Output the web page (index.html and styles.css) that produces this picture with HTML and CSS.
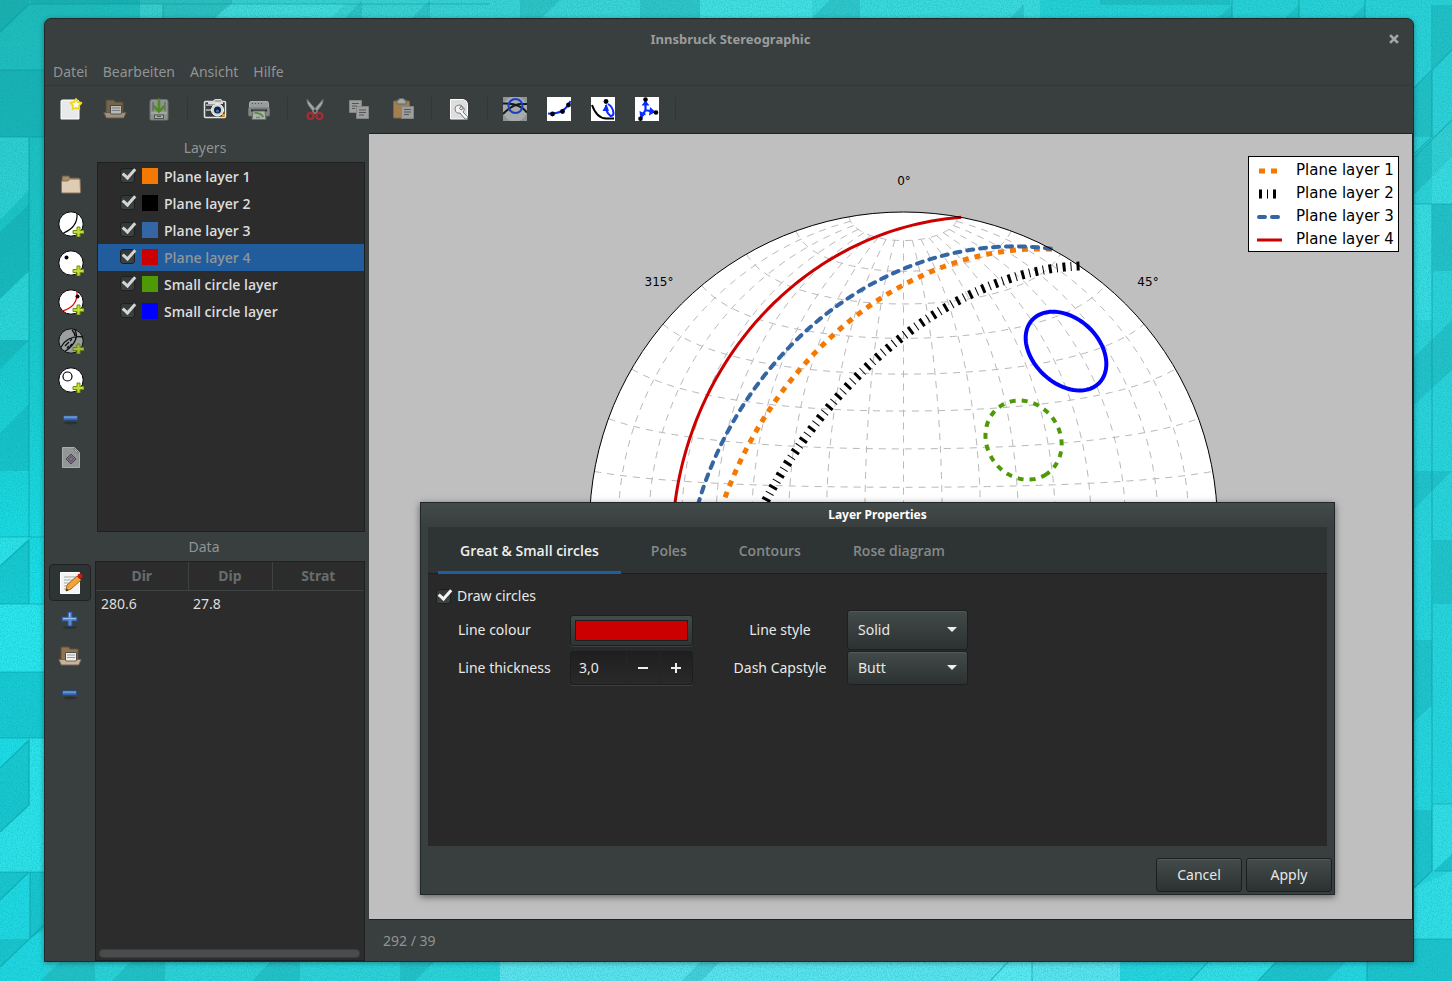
FILE: index.html
```html
<!DOCTYPE html>
<html lang="de">
<head>
<meta charset="utf-8">
<title>Innsbruck Stereographic</title>
<link rel="stylesheet" href="styles.css">
</head>
<body class="desktop">
<svg class="wallpaper" viewBox="0 0 1452 981" preserveAspectRatio="none" aria-hidden="true">
  <defs>
    <linearGradient id="wall" x1="0" y1="0" x2="1" y2="1">
      <stop offset="0" stop-color="#21b8b8"/><stop offset=".3" stop-color="#24d0d4"/><stop offset=".6" stop-color="#2fd2d8"/><stop offset="1" stop-color="#25d6e2"/>
    </linearGradient>
    <linearGradient id="wallLeft" x1="0" y1="0" x2="0" y2="1">
      <stop offset="0" stop-color="#22baba"/><stop offset=".35" stop-color="#1cc9cd"/><stop offset=".62" stop-color="#1ce0ea"/><stop offset="1" stop-color="#22d6e0"/>
    </linearGradient>
    <filter id="grain" x="0" y="0" width="100%" height="100%"><feTurbulence type="fractalNoise" baseFrequency=".8" numOctaves="2" seed="4"/><feColorMatrix type="matrix" values="0 0 0 0 0  0 0 0 0 .35  0 0 0 0 .38  1.4 0 0 0 -.55"/></filter>
  </defs>
  <rect width="1452" height="981" fill="url(#wall)"/>
  <rect width="46" height="981" fill="url(#wallLeft)"/>
  <rect x="140" width="900" height="20" fill="#62e6e8" opacity=".4"/>
  <rect x="500" y="960" width="620" height="21" fill="#8ff4ff" opacity=".5"/>
  <g fill="#0b8f96" opacity=".25">
    <path d="M0 0H29V4L0 32ZM0 70H46V137H0ZM29 204V271L0 299V232ZM0 340H29L0 369ZM29 404V471H0V433ZM29 540V604H0V566ZM0 672H46V738H0ZM29 740V805L0 832V768ZM0 872H29L0 900ZM30 872H44V930L30 938ZM0 939H29L0 967ZM60 962H95V981H40Z"/>
    <path d="M31 0H165V4H31ZM163 0H232V4L215 18H163ZM345 18L362 0V18ZM412 18L430 0V18ZM520 0H560L542 18H520ZM640 0H700V18H640ZM812 18L830 0H860V18ZM1010 18L1024 4V18ZM1100 0H1230V5H1100ZM1218 18L1232 5V18ZM1285 18L1299 5V18ZM1351 18L1365 5V18Z"/>
    <path d="M1433 5H1452V50L1433 68ZM1432 72V137H1414V88ZM1452 120V157L1414 195V157ZM1433 204H1452V271H1433ZM1452 320V370L1414 405V357ZM1414 471H1452L1414 509ZM1433 540H1452V604H1433ZM1414 640H1432V705L1414 722ZM1452 854V871H1434ZM1414 810H1432V871L1414 888ZM1414 939H1452V981H1414Z"/>
    <path d="M130 962H165V981H112ZM270 962H300V981H252ZM400 962H434L415 981H400ZM1276 962H1346L1327 981H1258ZM1367 962H1452V981H1367ZM700 962H720L701 981H682Z"/>
  </g>
  <g fill="#5ffafc" opacity=".25">
    <path d="M29 137V190L0 220V137ZM29 271V340H0V299ZM0 537H29L0 566ZM0 604H44V672H0ZM30 738H44V872H0V832L30 805Z"/>
    <path d="M230 4H345L331 18H215ZM700 0H812V18H700ZM1414 157L1452 120V204H1432V137ZM1433 804H1452V854L1433 871ZM1414 888L1452 871V939H1414ZM1414 204H1432V320H1414ZM1008 962H1032V981H990ZM1208 962H1276L1258 981H1190Z"/>
  </g>
  <path d="M0 32L29 4H490M0 70H46M0 137H46M29 137V537M0 537H44M0 566L29 540V604M0 604H44M0 672H44M0 738H44M0 768L29 740V805L0 832M0 872H44M0 900L29 872M30 872V938M0 967L44 925M163 4V18M1232 0V18M1299 0V18M1365 0V18M1432 5V137L1414 154M1452 50L1414 88M1452 120L1414 157M1414 204H1452M1432 204V804H1452M1432 804V871L1414 888M1434 871H1452M1414 939H1452M990 981L1008 962M1032 962V981M1190 981L1208 962M1258 981L1276 962M1367 962V981" fill="none" stroke="#07898f" stroke-width="1.2" opacity=".45"/>
  <rect width="1452" height="981" filter="url(#grain)" opacity=".6"/>
</svg>

<main class="window">
  <header class="titlebar">
    <h1 class="titlebar-text">Innsbruck Stereographic</h1>
    <button class="close" aria-label="Schließen"><svg width="10" height="10" viewBox="0 0 10 10"><path d="M2 2L8 8M8 2L2 8" stroke="#a3a6a4" stroke-width="2.6" stroke-linecap="square"/></svg></button>
  </header>
  <nav class="menubar">
    <button>Datei</button><button>Bearbeiten</button><button>Ansicht</button><button>Hilfe</button>
  </nav>

  <div class="toolbar">
    <button class="tool" aria-label="New"><svg viewBox="0 0 24 24"><path d="M4 3h14q2 0 2 2v17H2V4q0-1 2-1z" fill="#e9e9e9" stroke="#fff"/><path d="M17 2l1.800 3 3.600.8-2.400 2.800.3 3.600-3.300-1.400-3.300 1.400.3-3.600-2.400-2.800 3.600-.8z" fill="#fffdf0" stroke="#f0d91a" stroke-width="1.800" stroke-linejoin="round"/></svg></button>
    <button class="tool dim" aria-label="Open"><svg viewBox="0 0 24 24"><use href="#openfolder"/></svg></button>
    <button class="tool dim" aria-label="Save"><svg viewBox="0 0 24 24"><path d="M5 2.500h14q2 0 2 2V22q0 1-1 1H4q-1 0-1-1V4.500q0-2 2-2z" fill="#b4b7b3" stroke="#858985"/><path d="M5 5h2v9H5zM17 5h2v9h-2z" fill="#8b8f8b"/><path d="M4 16h16" stroke="#eceeea"/><rect x="7.500" y="18" width="9" height="3.500" fill="#dfe1dd" stroke="#5c605c"/><path d="M10 19.500h4" stroke="#5c605c"/><path d="M12 1.500v12M6.500 9l5.500 5.500L17.500 9" fill="none" stroke="#5cab1b" stroke-width="2.600"/></svg></button>
    <span class="sep"></span>
    <button class="tool" aria-label="Snapshot"><svg viewBox="0 0 24 24"><rect x="1.500" y="4.500" width="21" height="16" rx="1" fill="#383c3c" stroke="#e4e6e4" stroke-width="1.500"/><path d="M5 6V4h5l2-2h6l2 3v2H5z" fill="#d7d9d7"/><path d="M12 4h6" stroke="#777"/><path d="M3 8h8M3 13h5" stroke="#fff" stroke-width="1.200"/><circle cx="14.500" cy="13" r="6" fill="#d3d6d6" stroke="#fff"/><circle cx="14.500" cy="13" r="3.500" fill="#10243e"/><circle cx="14.500" cy="14" r="1.600" fill="#3d75b8"/><rect x="19" y="17" width="3" height="2.500" fill="#f29b17"/></svg></button>
    <button class="tool dim" aria-label="Print"><svg viewBox="0 0 24 24"><path d="M4 4.500h16q1.500 0 1.500 2V11h-19V6.500q0-2 1.500-2z" fill="#c2c5c2" stroke="#dcdedc"/><path d="M5 6.500h12" stroke="#5a5e5c" stroke-dasharray="1 2"/><path d="M1.500 11h21v7q0 1-1 1h-19q-1 0-1-1z" fill="#a3a6a3" stroke="#858885"/><path d="M4 12.500h16v2H4z" fill="#1f2323"/><path d="M6 14h12l1 8.500H5z" fill="#dfe3de" stroke="#7a7e7b"/><path d="M7.500 15.500l6 1.500 3 3" fill="none" stroke="#6fb04a" stroke-width="2"/><path d="M9 20.500h4" stroke="#7fa2c4" stroke-width="1.500"/></svg></button>
    <span class="sep"></span>
    <button class="tool dim" aria-label="Cut"><svg viewBox="0 0 24 24"><path d="M4 2.500q0 4 2 6.500l6.500 8 2-2.500zM20 2.500q0 4-2 6.500l-6.500 8-2-2.500z" fill="#d0d3d0" stroke="#9b9f9c" stroke-width=".8"/><circle cx="7.500" cy="19" r="3" fill="none" stroke="#d8262f" stroke-width="2.200"/><circle cx="16.500" cy="19" r="3" fill="none" stroke="#d8262f" stroke-width="2.200"/></svg></button>
    <button class="tool dim" aria-label="Copy"><svg viewBox="0 0 24 24"><g fill="#c6c9c6" stroke="#a0a4a1"><path d="M2.500 3.500h12v12h-12z"/><path d="M9.500 9.500h12v12h-12z"/></g><path d="M5 6.500h7M5 9h5M5 11.500h3M12 13h7M12 15.500h7M12 18h5" stroke="#5d615f"/></svg></button>
    <button class="tool dim" aria-label="Paste"><svg viewBox="0 0 24 24"><rect x="2.500" y="4" width="16" height="17" rx="1" fill="#cf9b58" stroke="#a07840"/><path d="M6 3h2V1.500h5V3h2v4H6z" fill="#d4d7d4" stroke="#777a77"/><path d="M10.500 9.500h12v12h-12z" fill="#c6c9c6" stroke="#a0a4a1"/><path d="M13 12.500h7M13 15h7M13 17.500h5" stroke="#5d615f"/></svg></button>
    <span class="sep"></span>
    <button class="tool" aria-label="Plot properties"><svg viewBox="0 0 24 24"><path d="M3.500 2.500h13q4 1 4 5V22h-17z" fill="#dcdddc" stroke="#fff"/><path d="M16 11a4 4 0 1 0-3 5l5 6q3 1 3-2l-5-5q2-2 1-4l-3 2-1.500-1.500L14 9q1 0 2 2z" fill="#f3f3f3" stroke="#777b79"/></svg></button>
    <span class="sep"></span>
    <button class="tool" aria-label="Intersect"><svg viewBox="0 0 24 24"><path d="M0 0h24v24H0z" fill="#8f9494"/><circle cx="12" cy="12" r="12.500" fill="#a7abab"/><path d="M0 17Q10 7 18 7h6M0 6.500Q16 6 24 15.500" fill="none" stroke="#151a1c" stroke-width="2"/><circle cx="12.500" cy="9" r="7" fill="none" stroke="#1e3fc0" stroke-width="2"/></svg></button>
    <button class="tool" aria-label="Best plane"><svg viewBox="0 0 24 24"><path d="M0 0h24v24H0z" fill="#fff"/><path d="M1 16.500Q17 18 23.500 4" fill="none" stroke="#0a2dff" stroke-width="2"/><circle cx="5.500" cy="17" r="2.400"/><circle cx="15.500" cy="14.500" r="2.400"/><circle cx="21.500" cy="8" r="2.400"/></svg></button>
    <button class="tool" aria-label="Plane from lines"><svg viewBox="0 0 24 24"><path d="M0 0h24v24H0z" fill="#fff"/><path d="M1 8Q6 22 16 21.500H23" fill="none" stroke="#000" stroke-width="2"/><path d="M17 7q5 3 5.500 9 0 3-3 3-5-4-4.500-11" fill="none" stroke="#0a2dff" stroke-width="2"/><path d="M11.500 14l4-7 2.500 7z" fill="#0a2dff"/><circle cx="15" cy="4.500" r="2.400"/></svg></button>
    <button class="tool" aria-label="Eigenvectors"><svg viewBox="0 0 24 24"><path d="M0 0h24v24H0z" fill="#fff"/><path d="M10.500 13V4M10 13l10 2M10.500 13L6 21" stroke="#0a2dff" stroke-width="2.200"/><path d="M6.500 8.500l4-5 4 5zM4.500 14l.8 7 6-4zM15 10l5.500 5-6.500 3.500z" fill="#0a2dff"/><circle cx="10.500" cy="2.500" r="2.300"/><circle cx="21" cy="15.500" r="2.300"/><circle cx="5.500" cy="21.700" r="2.300"/></svg></button>
    <span class="sep"></span>
  </div>

  <div class="body">
    <aside class="side">
      <section class="layers">
        <div class="rail rail-layers">
          <button aria-label="New group"><svg viewBox="0 0 26 26"><path d="M4 6q0-2 1-2h6l1 2h9v5H4z" fill="#a78c6b" stroke="#6f5a41"/><path d="M3.500 9H10l1.500-2H22l.5 13q0 1-1 1h-17q-1 0-1-1z" fill="#dfccb4" stroke="#8b745a"/></svg></button>
          <button aria-label="New plane layer"><svg viewBox="0 0 26 26"><circle cx="13" cy="13" r="12.200" fill="#fff" stroke="#000"/><path d="M19 2.500Q20 16 5.500 22" fill="none" stroke="#000" stroke-width="1.200"/><use href="#plus"/></svg></button>
          <button aria-label="New line layer"><svg viewBox="0 0 26 26"><circle cx="13" cy="13" r="12.200" fill="#fff" stroke="#000"/><circle cx="8.500" cy="7.500" r="2"/><use href="#plus"/></svg></button>
          <button aria-label="New fault layer"><svg viewBox="0 0 26 26"><circle cx="13" cy="13" r="12.200" fill="#fff" stroke="#000"/><path d="M19 2.500Q20 18 4 22" fill="none" stroke="#e80c0c" stroke-width="1.200"/><circle cx="19.500" cy="7.500" r="2"/><use href="#plus"/></svg></button>
          <button class="faded" aria-label="New plane and line layer"><svg viewBox="0 0 26 26"><circle cx="13" cy="13" r="12.200" fill="#b4b8b8" stroke="#000"/><path d="M3 19Q10 7 25 9M16.500 1Q23 12 7 23.500M14 2q3 3 3 6M7 18l4-4M9 20l2-2M14 11l-2 2M14 16l-2 2" fill="none" stroke="#000" stroke-width="1.300"/><use href="#plus"/></svg></button>
          <button aria-label="New small circle layer"><svg viewBox="0 0 26 26"><circle cx="13" cy="13" r="12.200" fill="#fff" stroke="#000"/><circle cx="9.500" cy="9.500" r="4.500" fill="none" stroke="#000" stroke-width="1.200"/><use href="#plus"/></svg></button>
          <button aria-label="Remove layer"><svg viewBox="0 0 26 26"><use href="#minus"/></svg></button>
          <button class="faded" aria-label="Layer properties"><svg viewBox="0 0 26 26"><path d="M4.500 2.500h12l5 5v15h-17z" fill="#a9adab" stroke="#c6cac7"/><path d="M16 3q0 5 5 5z" fill="#d4d8d5" stroke="#878c89"/><path d="M13 9l5 5-5 5-5-5z" fill="#8f8398" stroke="#4d4458"/><path d="M13 11.500l2.500 2.500-2.500 2.500-2.500-2.500z" fill="none" stroke="#4d4458" stroke-width=".8"/></svg></button>
        </div>
        <div class="pane">
          <h2 class="pane-title">Layers</h2>
          <ul class="layer-list">
            <li><input type="checkbox" checked id="l1"><span class="swatch orange"></span><label for="l1">Plane layer 1</label></li>
            <li><input type="checkbox" checked id="l2"><span class="swatch black"></span><label for="l2">Plane layer 2</label></li>
            <li><input type="checkbox" checked id="l3"><span class="swatch steel"></span><label for="l3">Plane layer 3</label></li>
            <li class="selected"><input type="checkbox" checked id="l4"><span class="swatch red"></span><label for="l4">Plane layer 4</label></li>
            <li><input type="checkbox" checked id="l5"><span class="swatch green"></span><label for="l5">Small circle layer</label></li>
            <li><input type="checkbox" checked id="l6"><span class="swatch blue"></span><label for="l6">Small circle layer</label></li>
          </ul>
        </div>
      </section>
      <section class="data">
        <div class="rail rail-data">
          <button class="active" aria-label="Edit"><svg viewBox="0 0 26 26"><path d="M3.500 2.500h19v21h-19z" fill="#f4f4f4" stroke="#fff"/><path d="M7 7h12M7 10h10M7 13h6M7 16h4M7 19h3" stroke="#a7a7a7"/><path d="M20 6l4 4-10 9-5 2 1-6z" fill="#f0a43a" stroke="#a5681b"/><path d="M9 21l.6-2.500 2 2z" fill="#222"/><circle cx="23" cy="6" r="2.500" fill="#cf1717"/></svg></button>
          <button aria-label="Add feature"><svg viewBox="0 0 26 26"><ellipse cx="13" cy="20.500" rx="7" ry="1.500" fill="#2c3030"/><path d="M11 5h4v5h5v4h-5v5h-4v-5H5v-4h6z" fill="#5c8bcb" stroke="#24539b"/><path d="M6 11.500h13M12.500 6v4" stroke="#9fc0ea"/></svg></button>
          <button aria-label="Import"><svg viewBox="0 0 26 26"><g transform="translate(1 0)"><use href="#openfolder"/></g></svg></button>
          <button aria-label="Remove feature"><svg viewBox="0 0 26 26"><use href="#minus"/></svg></button>
        </div>
        <div class="pane">
          <h2 class="pane-title">Data</h2>
          <div class="table-box">
            <table>
              <colgroup><col class="c1"><col class="c2"><col></colgroup>
              <thead><tr><th>Dir</th><th>Dip</th><th>Strat</th></tr></thead>
              <tbody><tr><td>280.6</td><td>27.8</td><td></td></tr></tbody>
            </table>
            <div class="hscroll"></div>
          </div>
        </div>
      </section>
    </aside>

    <section class="plot-column">
      <div class="plot">
        <svg id="net" class="net" viewBox="0 0 1043 785" preserveAspectRatio="xMidYMid meet" role="img" aria-label="Stereonet">
          <circle cx="534.500" cy="392" r="314" fill="#fff"/>
          <g id="grid" class="grid"></g>
          <g id="planes"></g>
          <circle class="rim" cx="534.500" cy="392" r="314"/>
          <text x="535" y="51">0°</text><text x="779" y="152">45°</text><text x="290" y="152">315°</text>
        </svg>
        <ul class="legend">
          <li><svg viewBox="0 0 26 10"><path class="p1" d="M2 5H26"/></svg>Plane layer 1</li>
          <li><svg viewBox="0 0 26 10"><path class="p2" d="M2 5H21"/></svg>Plane layer 2</li>
          <li><svg viewBox="0 0 26 10"><path class="p3" d="M2 5H21"/></svg>Plane layer 3</li>
          <li><svg viewBox="0 0 26 10"><path class="p4" d="M0 5H25"/></svg>Plane layer 4</li>
        </ul>
      </div>
      <footer class="status">292 / 39</footer>
    </section>
  </div>
</main>

<section class="dialog" role="dialog" aria-labelledby="dlg">
  <h2 id="dlg" class="dialog-title">Layer Properties</h2>
  <div class="notebook">
    <div class="tabs" role="tablist">
      <button role="tab" class="on" aria-selected="true">Great &amp; Small circles</button><button role="tab">Poles</button><button role="tab">Contours</button><button role="tab">Rose diagram</button>
    </div>
    <div class="page">
      <div class="draw"><input type="checkbox" checked id="draw"><label for="draw">Draw circles</label></div>
      <div class="form">
        <label for="colour">Line colour</label>
        <input class="colour" type="color" id="colour" value="#cc0000">
        <label class="mid" for="style">Line style</label>
        <div class="combo"><select id="style" class="tall"><option>Solid</option><option>Dashed</option></select></div>
        <label for="thick">Line thickness</label>
        <div class="spin"><input type="text" id="thick" value="3,0"><button aria-label="Less"><svg viewBox="0 0 12 12"><path d="M1 6H11" /></svg></button><button aria-label="More"><svg viewBox="0 0 12 12"><path d="M1 6H11M6 1V11"/></svg></button></div>
        <label class="mid" for="cap">Dash Capstyle</label>
        <div class="combo"><select id="cap"><option>Butt</option><option>Round</option></select></div>
      </div>
    </div>
  </div>
  <div class="actions"><button>Cancel</button><button>Apply</button></div>
</section>

<svg class="defs" aria-hidden="true">
  <defs>
    <g id="openfolder"><path d="M3 16V4q0-1 1-1h7l1 2h8v11z" fill="#8f7453" stroke="#654e33"/><path d="M7.500 8.500h11v9h-11z" fill="#eee" stroke="#4c4c4c"/><path d="M9 11h8M9 13.500h8" stroke="#999"/><path d="M.8 15.500H7l1 1.500h10l1-1.500h4.200L21 20.500q0 .5-1 .5H4q-1 0-1-.5z" fill="#c6b39d" stroke="#77634d"/></g>
    <g id="plus"><path d="M19 16h3v3.500h4v3h-4V26h-3v-3.500h-4v-3h4z" fill="#c3de32" stroke="#6f8f12"/></g>
    <g id="minus"><ellipse cx="13" cy="17" rx="7" ry="1.500" fill="#2c3030"/><path d="M5.500 10h14v4h-14z" fill="#3f74bd" stroke="#24539b"/><path d="M6 11h13" stroke="#8db2e2"/></g>
  </defs>
</svg>
<script src="script.js"></script>
</body>
</html>
```
FILE: styles.css
```css
* { box-sizing: border-box; }
body { margin: 0; font: 14px/20px "Noto Sans", "Open Sans", sans-serif; color: #919494; }
button, input, select { font: inherit; color: inherit; margin: 0; padding: 0; border: 0; background: none; }
h1, h2, ul { margin: 0; padding: 0; font-size: 14px; list-style: none; font-weight: 400; }
.desktop { position: relative; height: 100vh; min-height: 700px; padding: 18px 38px 19px 44px; display: flex; overflow: hidden; }
.wallpaper { position: absolute; inset: 0; width: 100%; height: 100%; z-index: -1; }
.defs { position: absolute; width: 0; height: 0; }

.window { flex: 1; min-width: 0; display: flex; flex-direction: column; background: #393e3e; border: 1px solid #252929; border-radius: 7px 7px 0 0; box-shadow: 0 1px 5px rgba(0,0,0,.35); }
.titlebar { display: flex; align-items: center; height: 39px; padding: 0 14px 0 27px; }
.titlebar-text { flex: 1; text-align: center; font-weight: 700; font-size: 13px; color: #9a9d9c; }
.close { display: flex; width: 10px; }
.menubar { display: flex; height: 28px; padding: 0 8px; gap: 15px; border-bottom: 1px solid #323737; }
.menubar button { padding-top: 1px; }
.toolbar { display: flex; align-items: center; height: 47px; padding: 0 4px 2px; }
.tool { width: 44px; height: 44px; display: grid; place-items: center; }
.tool svg { width: 24px; height: 24px; }
.dim { opacity: .7; }
.faded { opacity: .8; }
.sep { width: 12px; height: 24px; background: linear-gradient(#313636, #313636) center / 1px 100% no-repeat; }

.body { flex: 1; display: flex; min-height: 0; }
.side { flex: none; width: 324px; display: flex; flex-direction: column; padding-right: 4px; }
.layers { display: flex; height: 399px; }
.data { display: flex; flex: 1; min-height: 0; }
.rail { flex: none; display: flex; flex-direction: column; align-items: center; }
.rail-layers { width: 52px; padding-top: 32px; }
.rail-data { width: 50px; padding-top: 32px; }
.rail button { width: 42px; height: 37px; display: grid; place-items: center; border: 1px solid transparent; border-radius: 4px; }
.rail-layers button { height: 39px; }
.rail button.active { background: #2e3333; border-color: #1f2222; }
.rail svg { width: 26px; height: 26px; }
.pane { flex: 1; min-width: 0; display: flex; flex-direction: column; }
.pane-title { height: 29px; line-height: 30px; text-align: center; padding-right: 52px; }
.layer-list, .table-box { flex: 1; background: #2c2c2c; border: 1px solid #1e2121; min-height: 0; }
.layer-list li { height: 27px; display: flex; align-items: center; padding-left: 22px; color: #dcdcdc; font-family: "Open Sans", "Noto Sans", sans-serif; font-weight: 600; }
.layer-list li.selected { background: #215d9c; color: #8e9499; }
.layer-list input { margin-bottom: 3px; }
.swatch { width: 16px; height: 16px; margin: 0 6px 2px 7px; }
.orange { background: #f57900; } .black { background: #000; } .steel { background: #3465a4; }
.red { background: #c00; } .green { background: #4e9a06; } .blue { background: #00f; }
input[type=checkbox] { appearance: none; width: 15px; height: 15px; flex: none; border: 1px solid #1d2020; border-radius: 3px; background: linear-gradient(#323737, #3d4242); position: relative; }
input[type=checkbox]::after { content: ""; position: absolute; left: 4px; top: -3px; width: 5px; height: 10px; border: solid #d4d6d4; border-width: 0 3px 3px 0; transform: rotate(42deg); }
.table-box { display: flex; flex-direction: column; }
table { width: 100%; border-collapse: collapse; table-layout: fixed; }
.c1 { width: 92px; } .c2 { width: 84px; }
th { height: 28px; padding: 0; color: #686c6c; border-bottom: 1px solid #3d4343; border-right: 1px solid #3d4343; }
th:last-child { border-right: 0; }
td { height: 28px; padding: 0 5px; color: #dededc; }
.hscroll { margin: auto 4px 2px 3px; height: 9px; border-radius: 4px; background: #484c4c; border: 1px solid #3a3e3e; }

.plot-column { flex: 1; min-width: 0; display: flex; flex-direction: column; }
.plot { flex: 1; min-height: 0; position: relative; background: #bfbfbf; border: 1px solid #202323; border-width: 1px 1px 1px 0; }
.net { display: block; width: 100%; height: 100%; }
.net text { font: 12px "DejaVu Sans", sans-serif; text-anchor: middle; fill: #000; }
.net path, .legend path { fill: none; }
.grid path { stroke: #b8b8b8; stroke-width: 1; stroke-dasharray: 7 6; }
.rim { fill: none; stroke: #000; stroke-width: 1; }
.p1 { stroke: #f57900; stroke-width: 5; stroke-dasharray: 6 6; }
.p2 { stroke: #000; stroke-width: 9; stroke-dasharray: 3 5 1 5; }
.p3 { stroke: #3465a4; stroke-width: 4; stroke-dasharray: 6 7; stroke-linecap: round; }
.p4 { stroke: #c00; stroke-width: 3; }
.s1 { stroke: #4e9a06; stroke-width: 4; stroke-dasharray: 6 6; }
.s2 { stroke: #00f; stroke-width: 4; }
.legend { position: absolute; top: 22px; right: 13px; width: 151px; padding: 2px 0 0 8px; background: #fff; border: 1px solid #000; color: #000; font: 15px/23px "DejaVu Sans", sans-serif; }
.legend li { display: flex; align-items: center; gap: 13px; white-space: nowrap; }
.legend svg { width: 26px; height: 10px; flex: none; }
.status { height: 41px; line-height: 42px; padding-left: 14px; }

.dialog { position: absolute; left: 420px; top: 502px; width: 915px; color: #e8e8e6; background: #393e3e; border: 1px solid #22282a; box-shadow: 0 2px 7px rgba(0,0,0,.5); }
.dialog-title { height: 24px; line-height: 23px; text-align: center; font-weight: 700; font-size: 12px; color: #fff; background: linear-gradient(#434a4a, #393e3e); }
.notebook { margin: 0 7px; background: #292929; height: 319px; }
.tabs { display: flex; gap: 8px; height: 47px; padding: 0 10px; background: #2e3434; border-bottom: 1px solid #1b1f1f; font-family: "Open Sans", "Noto Sans", sans-serif; }
.tabs button { padding: 4px 22px 0; font-weight: 600; color: #858a89; height: 47px; border-bottom: 3px solid transparent; }
.tabs .on { color: #f0f0ee; border-color: #215d9c; }
.page { padding: 12px 8px; }
.draw { display: flex; align-items: center; gap: 6px; }
.page input[type=checkbox]::after { border-color: #f5f5f3; }
.form { display: grid; grid-template-columns: 92px 123px 114px 121px; column-gap: 20px; row-gap: 1px; padding: 4px 0 0 22px; align-items: center; white-space: nowrap; }
.mid { text-align: center; padding-left: 20px; }
.colour { width: 100%; height: 31px; padding: 4px; border: 1px solid #1c2020; border-radius: 3px; background: linear-gradient(#434a4a, #2f3535); box-shadow: 0 1px 0 #3c4040; }
.colour::-webkit-color-swatch-wrapper { padding: 0; }
.colour::-webkit-color-swatch { border: 1px solid #1c2020; border-radius: 0; }
.combo { position: relative; }
.combo::after { content: ""; position: absolute; right: 11px; top: 50%; margin-top: -3px; border: solid transparent; border-width: 5px 5px 0; border-top-color: #eee; pointer-events: none; }
.combo select { appearance: none; display: block; width: 100%; height: 34px; padding: 0 10px; border: 1px solid #1c2020; border-radius: 3px; background: linear-gradient(#434a4a, #2c3232); box-shadow: inset 0 1px 0 #535a5a; }
.combo select.tall { height: 40px; }
.spin { display: flex; height: 34px; border: 1px solid #1c1e1e; border-radius: 3px; background: linear-gradient(#1f1f1f, #292929); box-shadow: 0 1px 0 #3c4040; }
.spin input { flex: 1; min-width: 0; padding-left: 8px; }
.spin button { width: 33px; display: grid; place-items: center; border-left: 1px solid #252525; }
.spin svg { width: 12px; height: 12px; fill: none; stroke: #eee; stroke-width: 2; }
.actions { display: flex; justify-content: flex-end; gap: 4px; padding: 12px 2px 2px; }
.actions button { width: 86px; height: 34px; border: 1px solid #1a1e1e; border-radius: 3px; background: linear-gradient(#444b4b, #2c3232); box-shadow: inset 0 1px 0 #535a5a; }
```
FILE: script.js
```js
// Lambert equal-area stereonet, lower hemisphere.
const CX = 534.5, CY = 392, R = 314, D = Math.PI / 180;

// Unit vector (north, east, down) to plot coordinates.
function project([n, e, d]) {
  const k = R / Math.sqrt(1 + d);
  return (CX + e * k).toFixed(2) + " " + (CY - n * k).toFixed(2);
}
function addPath(parent, points, cls) {
  const p = document.createElementNS("http://www.w3.org/2000/svg", "path");
  p.setAttribute("d", "M" + points.map(project).join("L"));
  if (cls) p.setAttribute("class", cls);
  document.getElementById(parent).appendChild(p);
}
function greatCircle(strike, dip, from, to) {
  const pts = [];
  const s = strike * D, t = dip * D;
  for (let r = from; r <= to; r += 1) {
    const a = Math.cos(r * D), b = Math.sin(r * D);
    pts.push([a * Math.cos(s) + b * Math.cos(t) * Math.sin(s),
              a * Math.sin(s) - b * Math.cos(t) * Math.cos(s),
              b * Math.sin(t)]);
  }
  return pts;
}
function cone(azimuth, plunge, angle) {
  const a = azimuth * D, p = plunge * D, g = angle * D, pts = [];
  const axis = [Math.cos(p) * Math.cos(a), Math.cos(p) * Math.sin(a), Math.sin(p)];
  const u = [-Math.sin(a), Math.cos(a), 0];
  const v = [-Math.sin(p) * Math.cos(a), -Math.sin(p) * Math.sin(a), Math.cos(p)];
  for (let t = 0; t <= 360; t += 4) {
    pts.push(axis.map((x, i) => x * Math.cos(g) + Math.sin(g) * (u[i] * Math.cos(t * D) + v[i] * Math.sin(t * D))));
  }
  return pts;
}

for (let dip = 10; dip < 180; dip += 10) addPath("grid", greatCircle(0, dip, 10, 170));
for (let lat = -80; lat <= 80; lat += 10) {
  const pts = [];
  for (let t = 0; t <= 180; t += 2) {
    pts.push([Math.sin(lat * D), -Math.cos(lat * D) * Math.cos(t * D), Math.cos(lat * D) * Math.sin(t * D)]);
  }
  addPath("grid", pts);
}
addPath("planes", greatCircle(28.2, 43.6, 0, 180), "p1");
addPath("planes", greatCircle(34.1, 55.6, 0, 180), "p2");
addPath("planes", greatCircle(28, 36.6, 0, 180), "p3");
addPath("planes", greatCircle(10.6, 27.8, 0, 180), "p4");
addPath("planes", cone(54.4, 51, 10), "s1");
addPath("planes", cone(42.9, 24.6, 10), "s2");
```
